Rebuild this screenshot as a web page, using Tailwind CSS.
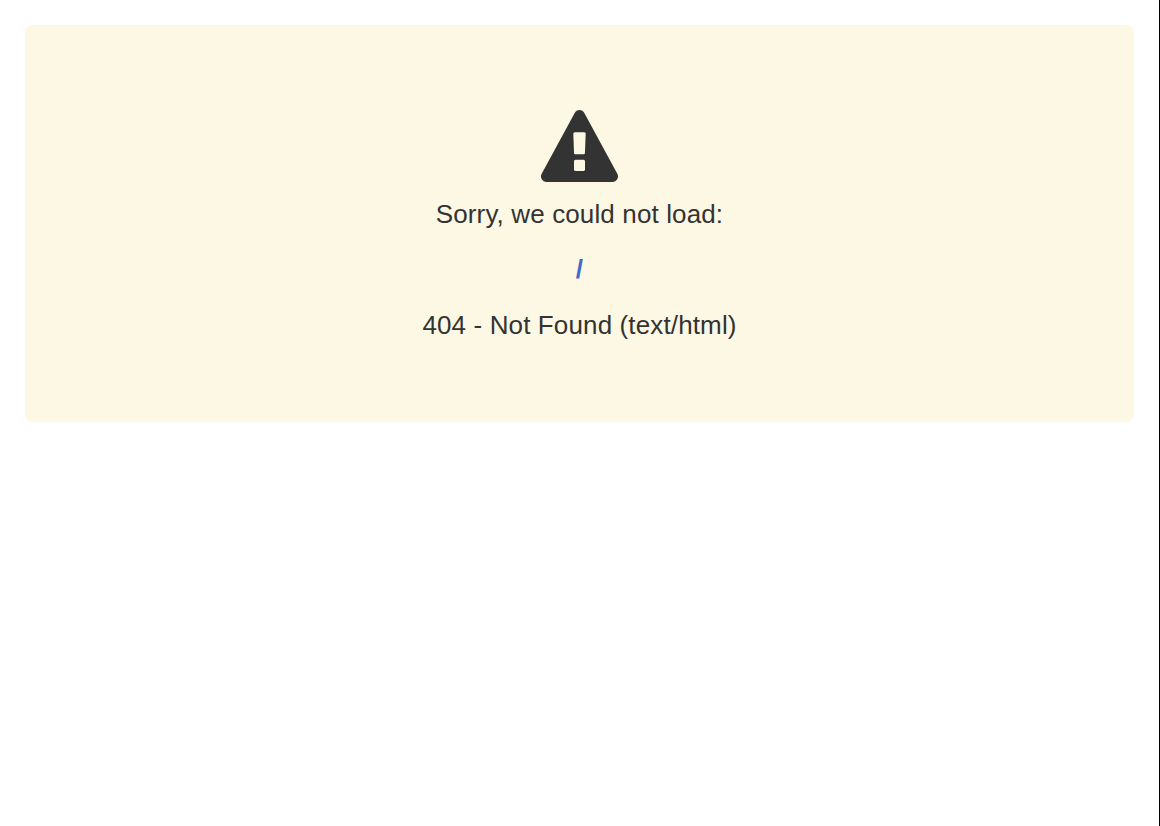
<!DOCTYPE html>
<html lang="en">
<head>
<meta charset="utf-8">
<title>Not Found</title>
<script src="https://cdn.jsdelivr.net/npm/@tailwindcss/browser@4"></script>
</head>
<body class="h-screen overflow-hidden border-r border-black bg-white p-[25px] font-['Liberation_Sans',Arial,sans-serif] text-[#333]">
<main class="flex h-[397px] flex-col items-center rounded-lg bg-[#fdf8e4] pt-[85px] text-center text-[26px] leading-[37px] tracking-[0.13px]">
<svg class="h-[72px] w-[77px] shrink-0" viewBox="0 0 1792 1664" preserveAspectRatio="none" fill="currentColor"><path d="M1024 1375v-190q0-14-9.500-23.500t-22.500-9.500h-192q-13 0-22.500 9.500t-9.500 23.500v190q0 14 9.500 23.500t22.500 9.500h192q13 0 22.500-9.500t9.500-23.500zm-2-374l18-459q0-12-10-19-13-11-24-11h-220q-11 0-24 11-10 7-10 21l17 457q0 10 10 16.500t24 6.500h185q14 0 23.500-6.500t10.500-16.500zm-14-934l768 1408q35 63-2 126-17 29-46.500 46t-63.500 17h-1536q-34 0-63.500-17t-46.500-46q-37-63-2-126l768-1408q17-31 47-49t65-18 65 18 47 49z"/></svg>
<p class="mt-[14px]">Sorry, we could not load:</p>
<a href="#" class="mt-[18px] font-bold text-[#4169cd]">/</a>
<p class="mt-[19px]">404 - Not Found (text/html)</p>
</main>
</body>
</html>
